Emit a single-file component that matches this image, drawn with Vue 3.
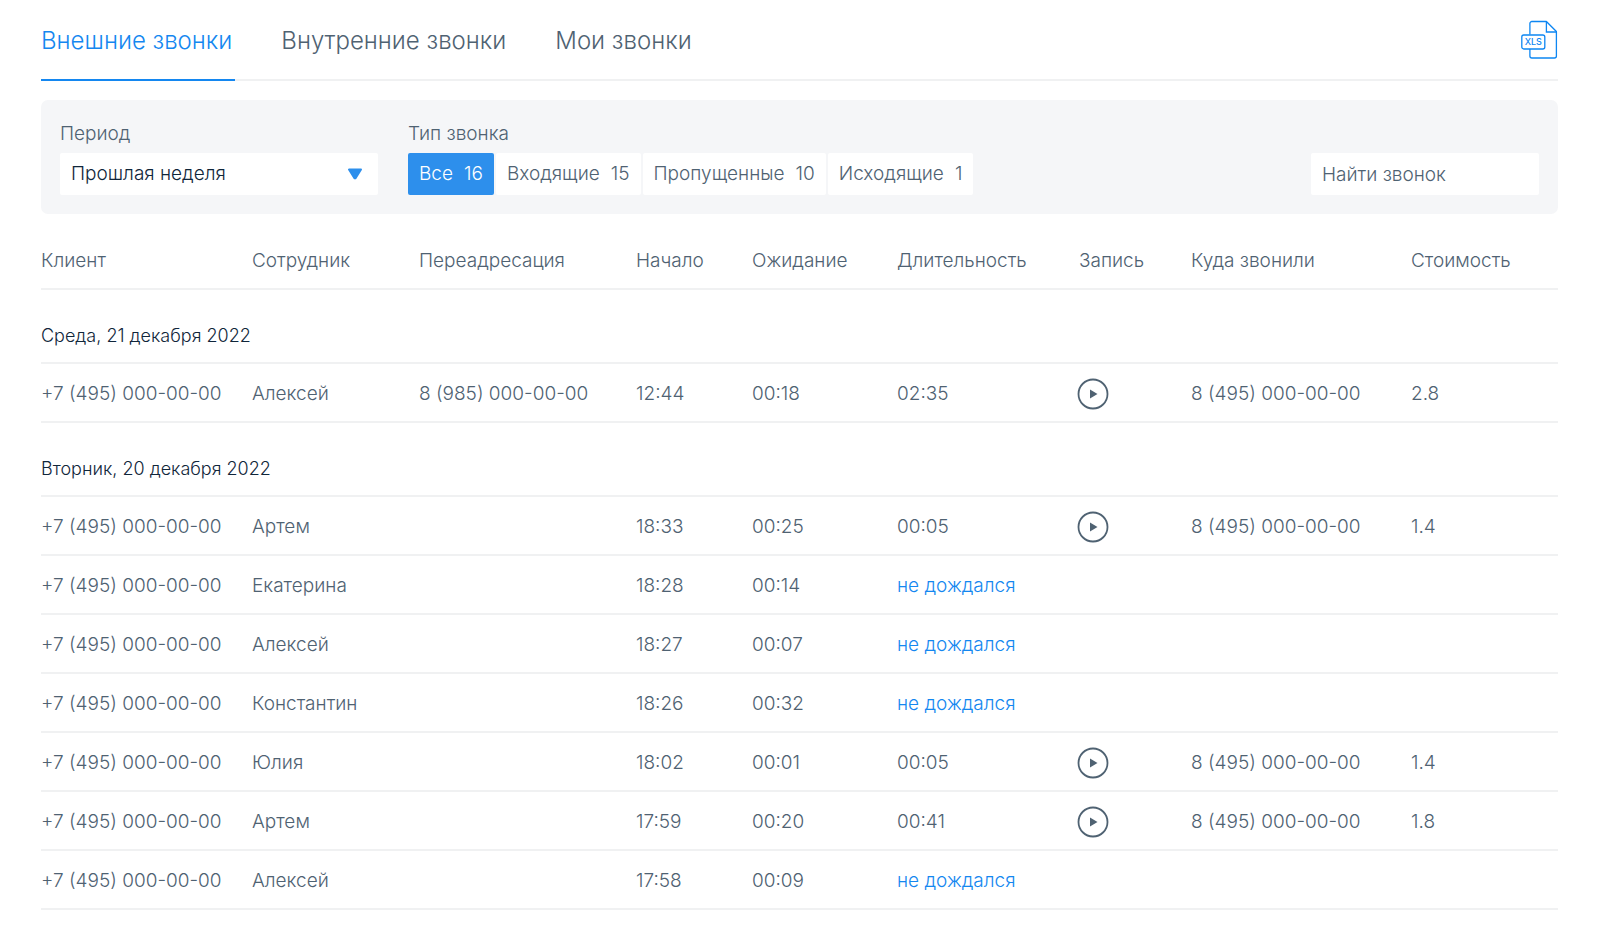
<template>
  <main class="calls">
    <header class="calls-header">
      <nav class="tabs">
        <a
          v-for="tab in tabs"
          :key="tab.id"
          href="#"
          class="tab"
          :class="{ active: tab.id === activeTab }"
          @click.prevent="activeTab = tab.id"
        >{{ tab.title }}</a>
      </nav>
      <button type="button" class="export-button" aria-label="XLS">
        <svg width="38" height="40" viewBox="0 0 38 40" fill="none" stroke="#0d86f2" stroke-width="1.3">
          <path d="M9.900 14.500V3.500a2 2 0 0 1 2-2h14.500l10 10v24.500a2 2 0 0 1-2 2H11.900a2 2 0 0 1-2-2V29" stroke-linejoin="round" />
          <path d="M26.400 1.500v10.500h10" />
          <rect x="1.800" y="15" width="23" height="14" rx="2" />
          <text x="13.300" y="25" text-anchor="middle" class="export-text">XLS</text>
        </svg>
      </button>
    </header>

    <section class="filters">
      <div class="filter period">
        <label for="period" class="filter-label">Период</label>
        <div class="select-wrap">
          <select id="period" v-model="period" class="control select">
            <option>Прошлая неделя</option>
          </select>
          <svg class="select-arrow" width="16" height="12" viewBox="0 0 16 12">
            <path d="M2 1.500h12L8.700 9.900a.8.8 0 0 1-1.400 0z" fill="#2d8fec" stroke="#2d8fec" stroke-width="2" stroke-linejoin="round" />
          </svg>
        </div>
      </div>

      <div class="filter">
        <span id="type-label" class="filter-label">Тип звонка</span>
        <div class="types" role="group" aria-labelledby="type-label">
          <button
            v-for="type in types"
            :key="type.title"
            type="button"
            class="control type"
            :class="{ active: type.title === activeType }"
            @click="activeType = type.title"
          >
            <span>{{ type.title }}</span>
            <span>{{ type.count }}</span>
          </button>
        </div>
      </div>

      <input v-model="search" type="text" class="control search" placeholder="Найти звонок" aria-label="Найти звонок">
    </section>

    <table class="table">
      <colgroup>
        <col class="col-client">
        <col class="col-employee">
        <col class="col-redirect">
        <col class="col-start">
        <col class="col-wait">
        <col class="col-duration">
        <col class="col-record">
        <col class="col-target">
        <col class="col-price">
      </colgroup>
      <thead>
        <tr>
          <th v-for="column in columns" :key="column" scope="col">{{ column }}</th>
        </tr>
      </thead>
      <tbody v-for="day in days" :key="day.date">
        <tr>
          <th colspan="9" scope="rowgroup" class="date">{{ day.date }}</th>
        </tr>
        <tr v-for="call in day.calls" :key="call.start">
          <td>+7 (495) 000-00-00</td>
          <td>{{ call.employee }}</td>
          <td>{{ call.redirect }}</td>
          <td>{{ call.start }}</td>
          <td>{{ call.wait }}</td>
          <td>
            <template v-if="call.duration">{{ call.duration }}</template>
            <span v-else class="missed">не дождался</span>
          </td>
          <td>
            <button v-if="call.duration" type="button" class="play" aria-label="Запись">
              <svg width="32" height="32" viewBox="0 0 32 32">
                <circle cx="16" cy="16" r="14.500" fill="none" stroke="#4f6272" stroke-width="1.800" />
                <path d="M13 11.500v9l7.500-4.500z" fill="#4f6272" />
              </svg>
            </button>
          </td>
          <td>{{ call.duration ? '8 (495) 000-00-00' : '' }}</td>
          <td>{{ call.price }}</td>
        </tr>
      </tbody>
    </table>
  </main>
</template>

<script setup>
import { ref } from 'vue'

const tabs = [
  { id: 'external', title: 'Внешние звонки' },
  { id: 'internal', title: 'Внутренние звонки' },
  { id: 'my', title: 'Мои звонки' },
]
const activeTab = ref('external')

const period = ref('Прошлая неделя')
const search = ref('')

const types = [
  { title: 'Все', count: 16 },
  { title: 'Входящие', count: 15 },
  { title: 'Пропущенные', count: 10 },
  { title: 'Исходящие', count: 1 },
]
const activeType = ref('Все')

const columns = [
  'Клиент',
  'Сотрудник',
  'Переадресация',
  'Начало',
  'Ожидание',
  'Длительность',
  'Запись',
  'Куда звонили',
  'Стоимость',
]

const days = [
  {
    date: 'Среда, 21 декабря 2022',
    calls: [
      { employee: 'Алексей', redirect: '8 (985) 000-00-00', start: '12:44', wait: '00:18', duration: '02:35', price: '2.8' },
    ],
  },
  {
    date: 'Вторник, 20 декабря 2022',
    calls: [
      { employee: 'Артем', start: '18:33', wait: '00:25', duration: '00:05', price: '1.4' },
      { employee: 'Екатерина', start: '18:28', wait: '00:14' },
      { employee: 'Алексей', start: '18:27', wait: '00:07' },
      { employee: 'Константин', start: '18:26', wait: '00:32' },
      { employee: 'Юлия', start: '18:02', wait: '00:01', duration: '00:05', price: '1.4' },
      { employee: 'Артем', start: '17:59', wait: '00:20', duration: '00:41', price: '1.8' },
      { employee: 'Алексей', start: '17:58', wait: '00:09' },
    ],
  },
]
</script>

<style>
body {
  margin: 0;
  background: #fff;
}
</style>

<style scoped>
* {
  box-sizing: border-box;
}

.calls {
  padding: 0 42px 36px 41px;
  font-family: Inter, 'Noto Sans', sans-serif;
  font-size: 19px;
  font-weight: 300;
  line-height: 24px;
  color: #4f6272;
}

button,
input,
select {
  font: inherit;
  color: inherit;
}

/* Вкладки */
.calls-header {
  display: flex;
  justify-content: space-between;
  align-items: center;
  border-bottom: 2px solid #f0f1f2;
}

.tabs {
  display: flex;
  gap: 46px;
}

.tab {
  margin-bottom: -2px;
  padding: 25px 3px 22px 0;
  border-bottom: 2px solid transparent;
  font-size: 24px;
  line-height: 32px;
  color: inherit;
  text-decoration: none;
}

.tab.active {
  color: #1487f0;
  border-bottom-color: #1487f0;
}

.export-button {
  display: flex;
  padding: 0;
  border: 0;
  background: none;
  cursor: pointer;
}

.export-text {
  font-size: 9px;
  font-weight: 500;
  fill: #0d86f2;
  stroke: none;
}

/* Фильтры */
.filters {
  display: flex;
  align-items: flex-end;
  gap: 30px;
  margin-top: 19px;
  padding: 22px 19px 19px;
  border-radius: 7px;
  background: #f5f6f8;
}

.filter-label {
  display: block;
  margin-bottom: 7px;
}

.period {
  width: 318px;
}

.control {
  height: 42px;
  padding: 0 11px;
  border: 0;
  border-radius: 2px;
  background: #fff;
}

.select-wrap {
  position: relative;
}

.select {
  width: 100%;
  appearance: none;
  color: #10263a;
}

.select-arrow {
  position: absolute;
  top: 15px;
  right: 15px;
  pointer-events: none;
}

.types {
  display: flex;
  gap: 2px;
}

.type {
  display: flex;
  align-items: center;
  gap: 11px;
  cursor: pointer;
}

.type.active {
  background: #2d8fec;
  color: #fff;
}

.search {
  width: 228px;
  margin-left: auto;
}

.search::placeholder {
  color: inherit;
  opacity: 1;
}

/* Таблица звонков */
.table {
  width: 100%;
  table-layout: fixed;
  border-collapse: separate;
  border-spacing: 0;
}

.col-client { width: 211px; }
.col-employee { width: 167px; }
.col-redirect { width: 217px; }
.col-start { width: 116px; }
.col-wait { width: 145px; }
.col-duration { width: 182px; }
.col-record { width: 112px; }
.col-target { width: 220px; }
.col-price { width: 147px; }

.table th,
.table td {
  height: 59px;
  padding: 2px 0 0;
  border-bottom: 2px solid #f0f1f2;
  font-weight: 300;
  text-align: left;
  white-space: nowrap;
}

.table th {
  height: 76px;
  padding-top: 20px;
}

.table .date {
  height: 74px;
  font-size: 18px;
  color: #10263a;
}

.missed {
  color: #1487f0;
}

.play {
  display: flex;
  margin-left: -2px;
  padding: 0;
  border: 0;
  background: none;
  cursor: pointer;
}
</style>
